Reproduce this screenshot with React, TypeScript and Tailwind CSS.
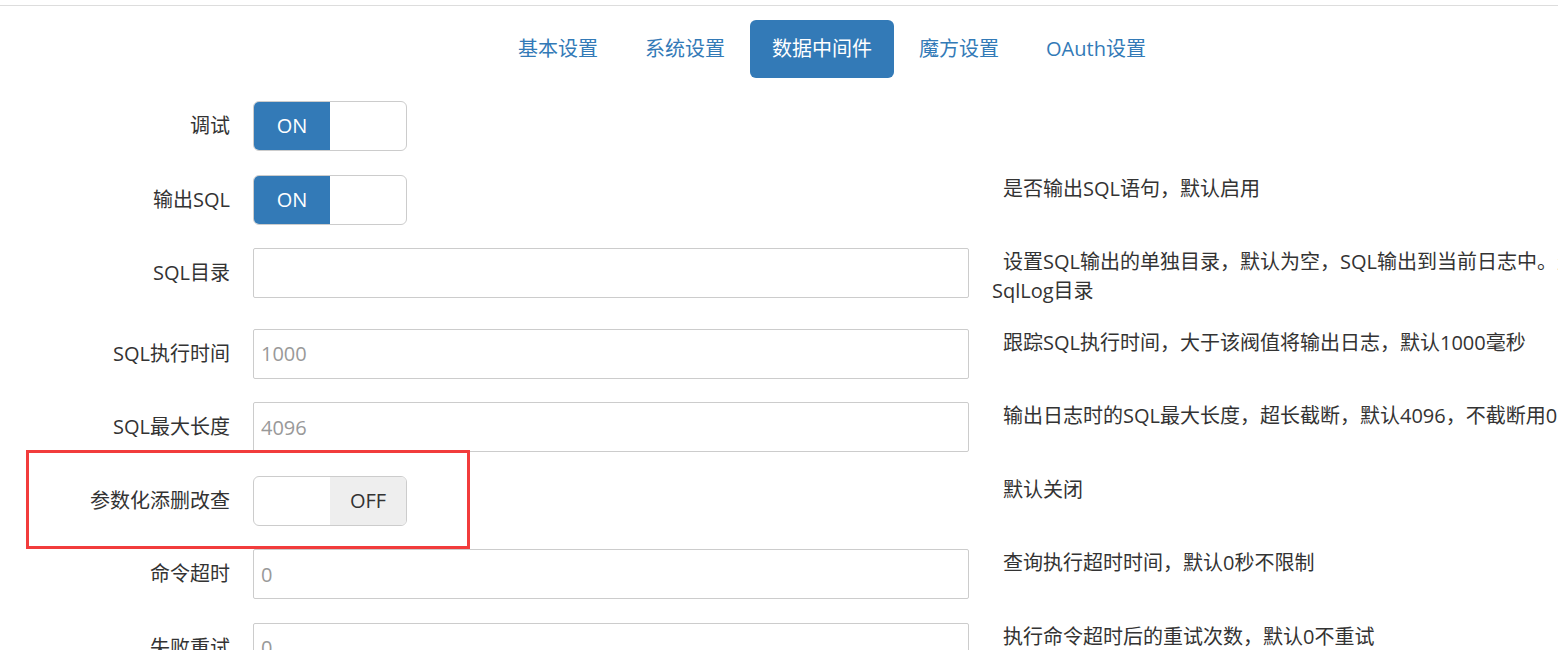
const tabs = ['基本设置', '系统设置', '数据中间件', '魔方设置', 'OAuth设置'];

type Row =
  | { label: string; kind: 'switch'; on: boolean; desc?: string }
  | { label: string; kind: 'input'; value: string; desc?: string };

const rows: Row[] = [
  { label: '调试', kind: 'switch', on: true },
  { label: '输出SQL', kind: 'switch', on: true, desc: '是否输出SQL语句，默认启用' },
  {
    label: 'SQL目录',
    kind: 'input',
    value: '',
    desc: '设置SQL输出的单独目录，默认为空，SQL输出到当前日志中。生产环境建议输出到站点外单独的SqlLog目录'
  },
  { label: 'SQL执行时间', kind: 'input', value: '1000', desc: '跟踪SQL执行时间，大于该阀值将输出日志，默认1000毫秒' },
  { label: 'SQL最大长度', kind: 'input', value: '4096', desc: '输出日志时的SQL最大长度，超长截断，默认4096，不截断用0' },
  { label: '参数化添删改查', kind: 'switch', on: false, desc: '默认关闭' },
  { label: '命令超时', kind: 'input', value: '0', desc: '查询执行超时时间，默认0秒不限制' },
  { label: '失败重试', kind: 'input', value: '0', desc: '执行命令超时后的重试次数，默认0不重试' }
];

function Switch({ on }: { on: boolean }) {
  return (
    <div className="flex h-[50px] w-[154px] overflow-hidden rounded-[6px] border border-[#ccc] bg-white">
      {on ? (
        <>
          <span className="flex w-[76px] items-center justify-center bg-[#337ab7] text-white">ON</span>
          <span className="flex-1" />
        </>
      ) : (
        <>
          <span className="w-[76px]" />
          <span className="flex flex-1 items-center justify-center bg-[#eee] text-[#333]">OFF</span>
        </>
      )}
    </div>
  );
}

export default function App() {
  return (
    <div
      className="relative h-[650px] w-full overflow-hidden bg-white text-[20px] text-[#333]"
      style={{ fontFamily: '"Open Sans", "Noto Sans CJK SC", sans-serif' }}
    >
      <div className="pt-[5px]">
        <div className="border-t border-[#ddd]" />
      </div>

      <div className="w-[1664px]">
        <ul className="mt-[14px] flex justify-center gap-[3px]">
          {tabs.map((tab) => (
            <li key={tab}>
              <a
                className={
                  tab === '数据中间件'
                    ? 'block rounded-[6px] bg-[#337ab7] px-[22px] py-[15px] leading-[28px] text-white'
                    : 'block rounded-[6px] px-[22px] py-[15px] leading-[28px] text-[#337ab7]'
                }
              >
                {tab}
              </a>
            </li>
          ))}
        </ul>
      </div>

      <div className="mt-[23px]">
        {rows.map((row) => (
          <div key={row.label} className="mb-[23.5px] flex items-start">
            <label className="w-[230px] shrink-0 text-right leading-[50px]">{row.label}</label>
            <div className="ml-[23px] w-[716px] shrink-0">
              {row.kind === 'switch' ? (
                <Switch on={row.on} />
              ) : (
                <input
                  type="text"
                  readOnly
                  placeholder={row.value}
                  className="h-[50px] w-full rounded-[2px] border border-[#ccc] bg-white px-[7px] text-[20px] text-[#555] outline-none placeholder:text-[#999]"
                />
              )}
            </div>
            <div className="ml-[23px] w-[870px] shrink-0 indent-[11px] leading-[28.5px]">{row.desc}</div>
          </div>
        ))}
      </div>

      <div className="absolute left-[26px] top-[450px] h-[99px] w-[444px] border-[3px] border-[#f23c3c]" />
    </div>
  );
}
